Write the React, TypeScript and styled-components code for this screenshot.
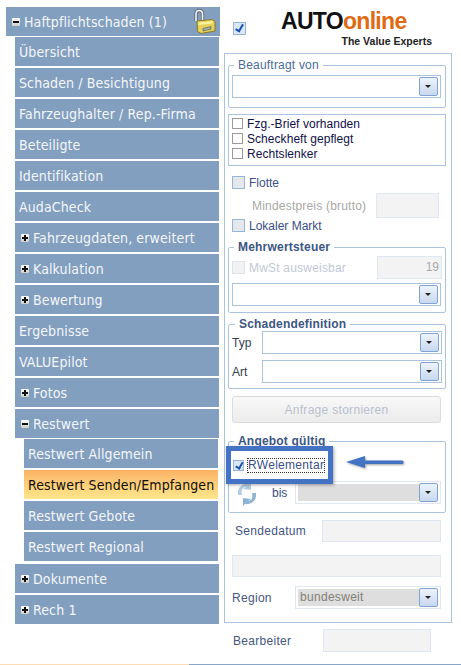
import React from 'react'
import styled, { createGlobalStyle } from 'styled-components'

const GlobalStyle = createGlobalStyle`
  html, body { margin: 0; padding: 0; background: #fff; }
  body { font-family: "Liberation Sans", Arial, sans-serif; font-size: 12px; }
`

type NavNode = { label: string; toggle?: 'plus' | 'minus'; active?: boolean; children?: NavNode[] }

const tree: NavNode = {
  label: 'Haftpflichtschaden (1)',
  toggle: 'minus',
  children: [
    { label: 'Übersicht' },
    { label: 'Schaden / Besichtigung' },
    { label: 'Fahrzeughalter / Rep.-Firma' },
    { label: 'Beteiligte' },
    { label: 'Identifikation' },
    { label: 'AudaCheck' },
    { label: 'Fahrzeugdaten, erweitert', toggle: 'plus' },
    { label: 'Kalkulation', toggle: 'plus' },
    { label: 'Bewertung', toggle: 'plus' },
    { label: 'Ergebnisse' },
    { label: 'VALUEpilot' },
    { label: 'Fotos', toggle: 'plus' },
    {
      label: 'Restwert',
      toggle: 'minus',
      children: [
        { label: 'Restwert Allgemein' },
        { label: 'Restwert Senden/Empfangen', active: true },
        { label: 'Restwert Gebote' },
        { label: 'Restwert Regional' },
      ],
    },
    { label: 'Dokumente', toggle: 'plus' },
    { label: 'Rech 1', toggle: 'plus' },
  ],
}

const NavItem = ({ node, root }: { node: NavNode; root?: boolean }) => (
  <Group>
    <Node $active={node.active}>
      {node.toggle && <Toggle $open={node.toggle === 'minus'} />}
      {node.label}
      {root && <LockIcon />}
    </Node>
    {node.children && (
      <SubList $root={root}>
        {node.children.map((c) => (
          <NavItem key={c.label} node={c} />
        ))}
      </SubList>
    )}
  </Group>
)

const LockIcon = () => (
  <LockSvg width="24" height="26" viewBox="0 0 24 26">
    <path d="M4 13V6c0-3 1.500-3.500 3-3.500S10.500 3 10.500 6v7" fill="none" stroke="#5f6878" strokeWidth="3.400" />
    <path d="M4 13V6c0-3 1.500-3.500 3-3.500S10.500 3 10.500 6v7" fill="none" stroke="#f2f4f6" strokeWidth="1.600" />
    <path d="M5 13l15-1.500 3 2V23l-14 2.500-3.500-2z" fill="#e4d259" stroke="#85792a" />
    <path d="M6.500 14.500l14-1.500v2.500l-14 1.500z" fill="#f9f19b" />
    <path d="M11 20.500l8-2v2.500l-8 2z" fill="#a8b0ad" stroke="#565f5c" strokeWidth=".7" />
  </LockSvg>
)

const Select = ({ value, disabled, width }: { value?: string; disabled?: boolean; width?: number }) => (
  <SelectBox $disabled={disabled} $width={width}>
    <SelectValue $disabled={disabled}>{value}</SelectValue>
    <SelectButton />
  </SelectBox>
)

const App = () => {
  return (
    <>
      <GlobalStyle />
      <Page>
        <Main>
          <Tree>
            <NavItem node={tree} root />
          </Tree>
          <Right>
            <TopBar>
              <TopCheck><Check $size={13} $checked /></TopCheck>
              <Logo>
                <LogoName>
                  AUTO<LogoAccent>online</LogoAccent>
                </LogoName>
                <LogoClaim>The Value Experts</LogoClaim>
              </Logo>
            </TopBar>
            <Panel>
              <Fieldset $pad="3px 3px 9px">
                <Legend>Beauftragt von</Legend>
                <Select />
              </Fieldset>
              <CheckList>
                <CheckRow><Check $size={11} $plain />Fzg.-Brief vorhanden</CheckRow>
                <CheckRow><Check $size={11} $plain />Scheckheft gepflegt</CheckRow>
                <CheckRow><Check $size={11} $plain />Rechtslenker</CheckRow>
              </CheckList>
              <FlotteBlock>
                <OptionRow><Check $size={13} />Flotte</OptionRow>
                <PriceRow>
                  <MutedLabel>Mindestpreis (brutto)</MutedLabel>
                  <Input $width={63} $height={25} />
                </PriceRow>
                <OptionRow><Check $size={13} />Lokaler Markt</OptionRow>
              </FlotteBlock>
              <Fieldset $pad="2px 3px 6px" $top={7}>
                <Legend $bold>Mehrwertsteuer</Legend>
                <SpreadRow>
                  <DisabledOption><Check $size={13} $faint />MwSt ausweisbar</DisabledOption>
                  <Input $width={65} $height={23}>19</Input>
                </SpreadRow>
                <Select />
              </Fieldset>
              <Fieldset $pad="0 3px 5px" $top={4}>
                <Legend $bold $offset={1}>Schadendefinition</Legend>
                <FieldRow><FieldLabel>Typ</FieldLabel><Select width={180} /></FieldRow>
                <FieldRow $gap={6}><FieldLabel>Art</FieldLabel><Select width={180} /></FieldRow>
              </Fieldset>
              <CancelButton>Anfrage stornieren</CancelButton>
              <Fieldset $pad="0 3px 8px" $top={11}>
                <Legend $bold>Angebot gültig</Legend>
                <OfferBody>
                  <FocusRow>
                    <Check $size={11} $checked />
                    <FocusLabel>RWelementar</FocusLabel>
                  </FocusRow>
                  <UntilRow>
                    <RefreshIcon width="24" height="26" viewBox="0 0 24 26">
                      <path d="M3 14C2 6 8 2 14 3l2-2v8l-8-1 3-2c-4 0-5 4-4 8z" fill="#b4cde2" />
                      <path d="M21 12c1 8-5 12-11 11l-2 2v-8l8 1-3 2c4 0 5-4 4-8z" fill="#8fb4d2" />
                    </RefreshIcon>
                    <UntilLabel>bis</UntilLabel>
                    <Select disabled width={146} />
                  </UntilRow>
                  <Highlight />
                  <Arrow width="60" height="16" viewBox="0 0 60 16">
                    <path d="M1 7l19-6v4.500h37c2 0 2 3.500 0 3.500H20v4z" fill="#4472c4" />
                  </Arrow>
                </OfferBody>
              </Fieldset>
              <SendRow>
                <PlainLabel>Sendedatum</PlainLabel>
                <Input $width={119} $height={22} />
              </SendRow>
              <BlankRow><Input $width={209} $height={22} /></BlankRow>
              <RegionRow>
                <PlainLabel>Region</PlainLabel>
                <Select disabled value="bundesweit" width={146} />
              </RegionRow>
            </Panel>
            <EditorRow>
              <PlainLabel>Bearbeiter</PlainLabel>
              <Input $width={108} $height={23} />
            </EditorRow>
          </Right>
        </Main>
        <Footer>
          <FooterPart $color="#fbdcb4" $width={189} />
          <FooterPart $color="#8aa6c6" />
        </Footer>
      </Page>
    </>
  )
}

export default App

const Page = styled.div`
  width: 461px;
  height: 665px;
  overflow: hidden;
  display: flex;
  flex-direction: column;
`

const Main = styled.div`
  height: 664px;
  display: flex;
  gap: 4px;
  padding-left: 6px;
`

const Footer = styled.div`
  height: 1px;
  display: flex;
`

const FooterPart = styled.div<{ $color: string; $width?: number }>`
  background: ${(p) => p.$color};
  flex: ${(p) => (p.$width ? `0 0 ${p.$width}px` : '1')};
`

const Tree = styled.nav`
  width: 214px;
  padding-top: 7px;
  font-family: "DejaVu Sans Condensed", "DejaVu Sans", sans-serif;
  font-stretch: condensed;
  font-size: 14px;
  letter-spacing: 0.12px;
`

const Group = styled.div`
  display: flex;
  flex-direction: column;
  gap: 1px;
`

const SubList = styled.div<{ $root?: boolean }>`
  display: flex;
  flex-direction: column;
  gap: 2px;
  padding: 0 1px 0 9px;
  margin-bottom: ${(p) => (p.$root ? 0 : 1)}px;
`

const Node = styled.div<{ $active?: boolean }>`
  position: relative;
  height: 29px;
  display: flex;
  align-items: center;
  padding-left: 4px;
  white-space: nowrap;
  overflow: hidden;
  color: ${(p) => (p.$active ? '#10100c' : '#f4f6f8')};
  background: ${(p) =>
    p.$active ? 'linear-gradient(#f9b263 0%, #fdc676 35%, #fedb80 75%, #ffe58c 100%)' : '#829fc0'};
`

const Toggle = styled.span<{ $open: boolean }>`
  position: relative;
  flex: none;
  width: 8px;
  height: 8px;
  margin: 0 4px 0 2px;
  background: linear-gradient(#fff, #cfcfc8);
  border-radius: 1px;

  &::before {
    content: '';
    position: absolute;
    left: 1px;
    top: 3px;
    width: 6px;
    height: 2px;
    background: #111;
  }

  &::after {
    content: '';
    display: ${(p) => (p.$open ? 'none' : 'block')};
    position: absolute;
    left: 3px;
    top: 1px;
    width: 2px;
    height: 6px;
    background: #111;
  }
`

const LockSvg = styled.svg`
  position: absolute;
  right: 4px;
  top: 1px;
`

const Right = styled.div`
  width: 228px;
  display: flex;
  flex-direction: column;
`

const TopBar = styled.div`
  height: 53px;
  display: flex;
  align-items: flex-start;
`

const TopCheck = styled.div`
  padding: 22px 0 0 9px;
  line-height: 0;
`

const Check = styled.span<{ $size: number; $checked?: boolean; $plain?: boolean; $faint?: boolean }>`
  flex: none;
  box-sizing: border-box;
  display: inline-block;
  position: relative;
  width: ${(p) => p.$size}px;
  height: ${(p) => p.$size}px;
  border: 1px solid ${(p) => (p.$faint ? '#dde3ea' : p.$plain ? '#9a9a9a' : '#98b4d6')};
  background: ${(p) => (p.$faint ? '#f2f2f2' : p.$plain ? '#fff' : p.$checked ? '#dbe7f4' : '#e4e8ec')};

  &::after {
    content: '';
    display: ${(p) => (p.$checked ? 'block' : 'none')};
    position: absolute;
    left: 30%;
    top: 0;
    width: 30%;
    height: 62%;
    border: solid #1a52b4;
    border-width: 0 2px 2px 0;
    transform: rotate(30deg);
  }
`

const Logo = styled.div`
  margin-left: 35px;
  padding-top: 10px;
  width: 151px;
  display: flex;
  flex-direction: column;
  align-items: flex-end;
`

const LogoName = styled.div`
  width: 100%;
  font-size: 23px;
  line-height: 22px;
  font-weight: 700;
  letter-spacing: -0.7px;
  color: #111;
`

const LogoAccent = styled.span`
  color: #df6a12;
`

const LogoClaim = styled.div`
  margin-top: 1px;
  font-size: 10.500px;
  line-height: 16px;
  font-weight: 700;
  color: #222;
`

const Panel = styled.div`
  height: 570px;
  box-sizing: border-box;
  border: 1px solid #a9c3e0;
  padding: 4px 5px 0 3px;
  display: flex;
  flex-direction: column;
`

const Fieldset = styled.fieldset<{ $pad: string; $top?: number }>`
  margin: ${(p) => p.$top ?? 0}px 0 0;
  padding: ${(p) => p.$pad};
  min-width: 0;
  border: 1px solid #a9c3e0;
  border-radius: 2px;
`

const Legend = styled.legend<{ $bold?: boolean; $offset?: number }>`
  margin-left: ${(p) => 2 + (p.$offset ?? 0)}px;
  padding: 0 4px 0 4px;
  font-size: 12px;
  line-height: 14px;
  font-weight: ${(p) => (p.$bold ? 700 : 400)};
  letter-spacing: 0.2px;
  color: ${(p) => (p.$bold ? '#3b5684' : '#4a6b9c')};
`

const SelectBox = styled.div<{ $disabled?: boolean; $width?: number }>`
  box-sizing: border-box;
  width: ${(p) => p.$width ?? 209}px;
  height: 23px;
  flex: none;
  display: flex;
  align-items: center;
  padding: 2px;
  border: 1px solid ${(p) => (p.$disabled ? '#dfe8f2' : '#a9c3e0')};
  background: #fff;
`

const SelectValue = styled.div<{ $disabled?: boolean }>`
  flex: 1;
  height: 17px;
  padding-left: 2px;
  font-size: 12px;
  line-height: 17px;
  letter-spacing: 0.3px;
  color: #857f76;
  background: ${(p) => (p.$disabled ? '#dedede' : '#fff')};
`

const SelectButton = styled.div`
  position: relative;
  flex: none;
  box-sizing: border-box;
  width: 19px;
  height: 19px;
  border: 1px solid #7ea3d4;
  border-radius: 2px;
  background: linear-gradient(#eef3fa, #c7d8ee);

  &::after {
    content: '';
    position: absolute;
    left: 5px;
    top: 7px;
    border: 3px solid transparent;
    border-top: 3px solid #222;
    border-bottom: 0;
  }
`

const CheckList = styled.div`
  margin-top: 6px;
  height: 52px;
  box-sizing: border-box;
  border: 1px solid #a9c3e0;
  padding: 1px 3px;
`

const CheckRow = styled.div`
  height: 15px;
  display: flex;
  align-items: center;
  gap: 4px;
  color: #10104a;
  letter-spacing: 0.05px;
`

const FlotteBlock = styled.div`
  margin-top: 9px;
  padding-left: 4px;
  padding-right: 7px;
`

const OptionRow = styled.div`
  height: 15px;
  display: flex;
  align-items: center;
  gap: 4px;
  color: #3a4f86;
`

const PriceRow = styled.div`
  height: 25px;
  margin-top: 3px;
  display: flex;
  align-items: center;
  justify-content: space-between;
  padding-left: 20px;
`

const MutedLabel = styled.span`
  letter-spacing: 0.2px;
  color: #a9a9a4;
`

const Input = styled.div<{ $width: number; $height: number }>`
  flex: none;
  box-sizing: border-box;
  width: ${(p) => p.$width}px;
  height: ${(p) => p.$height}px;
  border: 1px solid #dfe8f2;
  background: #f3f3f3;
  padding-right: 2px;
  text-align: right;
  font-size: 12px;
  line-height: ${(p) => p.$height - 2}px;
  color: #a9a9a9;
`

const SpreadRow = styled.div`
  display: flex;
  justify-content: space-between;
  align-items: center;
  margin-bottom: 4px;
`

const DisabledOption = styled.span`
  display: flex;
  align-items: center;
  gap: 4px;
  letter-spacing: 0.2px;
  color: #c3c8d6;
`

const FieldRow = styled.div<{ $gap?: number }>`
  display: flex;
  justify-content: space-between;
  align-items: center;
  margin-top: ${(p) => p.$gap ?? 0}px;
`

const FieldLabel = styled.span`
  color: #333c52;
`

const CancelButton = styled.div`
  margin: 7px 5px 0 4px;
  height: 27px;
  flex: none;
  box-sizing: border-box;
  border: 1px solid #dcdcdc;
  border-radius: 3px;
  background: linear-gradient(#f8f8f8, #ececec);
  text-align: center;
  line-height: 27px;
  letter-spacing: 0.3px;
  color: #b9bfcd;
`

const OfferBody = styled.div`
  position: relative;
`

const Highlight = styled.div`
  position: absolute;
  left: -6px;
  top: -2px;
  width: 107px;
  height: 38px;
  box-sizing: border-box;
  border: 5px solid #4472c4;
  box-shadow: 1px 1px 3px rgba(60, 60, 60, 0.45);
`

const FocusRow = styled.div`
  height: 14px;
  padding: 10px 0 0 1px;
  display: flex;
  align-items: center;
  gap: 4px;
`

const FocusLabel = styled.span`
  outline: 1px dotted #333;
  outline-offset: 0;
  line-height: 13px;
  letter-spacing: 0.3px;
  color: #3a4f86;
`

const Arrow = styled.svg`
  position: absolute;
  left: 113px;
  top: 7px;
  filter: drop-shadow(1px 1px 1px rgba(70, 70, 70, 0.5));
`

const UntilRow = styled.div`
  height: 23px;
  display: flex;
  align-items: center;
  margin-top: 9px;
  padding-left: 3px;
`

const RefreshIcon = styled.svg`
  flex: none;
  margin: 3px 13px 0 0;
`

const UntilLabel = styled.span`
  width: 23px;
  flex: none;
  color: #3a4f86;
`

const PlainLabel = styled.span`
  letter-spacing: 0.3px;
  color: #44557f;
`

const SendRow = styled.div`
  margin-top: 7px;
  padding: 0 5px 0 7px;
  display: flex;
  justify-content: space-between;
  align-items: center;
`

const BlankRow = styled.div`
  margin-top: 13px;
  padding: 0 5px 0 4px;
`

const RegionRow = styled.div`
  margin-top: 9px;
  padding: 0 5px 0 4px;
  display: flex;
  justify-content: space-between;
  align-items: center;
`

const EditorRow = styled.div`
  margin-top: 6px;
  width: 198px;
  padding-left: 9px;
  display: flex;
  justify-content: space-between;
  align-items: center;
`
